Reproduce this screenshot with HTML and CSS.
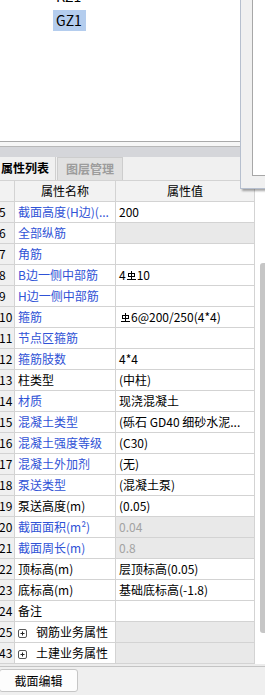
FILE: index.html
```html
<!DOCTYPE html>
<html lang="zh-CN">
<head>
<meta charset="utf-8">
<title>属性列表</title>
<link rel="stylesheet" href="styles.css">
</head>
<body>
<div class="app">
  <div class="tree">
    <div class="tree-item">KZ1</div>
    <div class="tree-item selected">GZ1</div>
  </div>
  <div class="splitter"></div>
  <div class="band"></div>
  <div class="tabs">
    <div class="tab active">属性列表</div>
    <div class="tab">图层管理</div>
  </div>
  <div class="grid-area">
    <div class="props">
      <div class="row head"><div class="num"></div><div class="name">属性名称</div><div class="val">属性值</div></div>
      <div class="row"><div class="num">5</div><div class="name blue">截面高度(H边)(...</div><div class="val">200</div></div>
      <div class="row"><div class="num">6</div><div class="name blue">全部纵筋</div><div class="val off"></div></div>
      <div class="row"><div class="num">7</div><div class="name blue">角筋</div><div class="val"></div></div>
      <div class="row"><div class="num">8</div><div class="name blue">B边一侧中部筋</div><div class="val">4<svg class="grade" width="9" height="9" viewBox="0 0 9 9"><path d="M4.5 0V8.5M0 8.5H9" stroke="#000" fill="none"/><rect x="1.5" y="2.5" width="6" height="3" stroke="#000" fill="none"/></svg>10</div></div>
      <div class="row"><div class="num">9</div><div class="name blue">H边一侧中部筋</div><div class="val"></div></div>
      <div class="row"><div class="num">10</div><div class="name blue">箍筋</div><div class="val"><svg class="grade lead" width="9" height="9" viewBox="0 0 9 9"><path d="M4.5 0V8.5M0 8.5H9" stroke="#000" fill="none"/><rect x="1.5" y="2.5" width="6" height="3" stroke="#000" fill="none"/></svg>6@200/250(4*4)</div></div>
      <div class="row"><div class="num">11</div><div class="name blue">节点区箍筋</div><div class="val"></div></div>
      <div class="row"><div class="num">12</div><div class="name blue">箍筋肢数</div><div class="val">4*4</div></div>
      <div class="row"><div class="num">13</div><div class="name">柱类型</div><div class="val">(中柱)</div></div>
      <div class="row"><div class="num">14</div><div class="name blue">材质</div><div class="val">现浇混凝土</div></div>
      <div class="row"><div class="num">15</div><div class="name blue">混凝土类型</div><div class="val">(砾石 GD40 细砂水泥...</div></div>
      <div class="row"><div class="num">16</div><div class="name blue">混凝土强度等级</div><div class="val">(C30)</div></div>
      <div class="row"><div class="num">17</div><div class="name blue">混凝土外加剂</div><div class="val">(无)</div></div>
      <div class="row"><div class="num">18</div><div class="name blue">泵送类型</div><div class="val">(混凝土泵)</div></div>
      <div class="row"><div class="num">19</div><div class="name">泵送高度(m)</div><div class="val">(0.05)</div></div>
      <div class="row"><div class="num">20</div><div class="name blue">截面面积(m²)</div><div class="val off">0.04</div></div>
      <div class="row"><div class="num">21</div><div class="name blue">截面周长(m)</div><div class="val off">0.8</div></div>
      <div class="row"><div class="num">22</div><div class="name">顶标高(m)</div><div class="val">层顶标高(0.05)</div></div>
      <div class="row"><div class="num">23</div><div class="name">底标高(m)</div><div class="val">基础底标高(-1.8)</div></div>
      <div class="row"><div class="num">24</div><div class="name">备注</div><div class="val"></div></div>
      <div class="row"><div class="num">25</div><div class="name"><svg class="expander" width="9" height="9" viewBox="0 0 9 9"><rect x="0.5" y="0.5" width="8" height="8" rx="1.5" stroke="#555" fill="#fff"/><path d="M2.5 4.5H6.5M4.5 2.5V6.5" stroke="#222"/></svg>钢筋业务属性</div><div class="val off"></div></div>
      <div class="row"><div class="num">43</div><div class="name"><svg class="expander" width="9" height="9" viewBox="0 0 9 9"><rect x="0.5" y="0.5" width="8" height="8" rx="1.5" stroke="#555" fill="#fff"/><path d="M2.5 4.5H6.5M4.5 2.5V6.5" stroke="#222"/></svg>土建业务属性</div><div class="val off"></div></div>
    </div>
    <div class="vscroll"><div class="thumb"></div></div>
  </div>
  <div class="rest-row"></div>
  <div class="footer"><button class="btn">截面编辑</button></div>
  <div class="float-panel"><div class="float-inner"></div></div>
</div>
</body>
</html>
```

FILE: styles.css
```css
html, body {
    margin: 0;
    padding: 0;
}

body {
    width: 265px;
    height: 695px;
    overflow: hidden;
    background: #ffffff;
    font-family: "Noto Sans CJK SC", "Noto Sans", sans-serif;
    font-size: 12px;
    color: #000;
}

.app {
    position: relative;
    width: 265px;
    height: 695px;
    overflow: hidden;
}

/* component tree */
.tree {
    height: 141px;
    width: 240px;
    background: #fff;
    border-bottom: 1px solid #a9a9a9;
    overflow: hidden;
}

.tree-item {
    width: fit-content;
    height: 21px;
    line-height: 21px;
    margin: 0 0 3px 53px;
    padding: 0 4px 0 3px;
    font-size: 14px;
}

.tree-item:first-child {
    margin-top: -14px;
}

.tree-item.selected {
    background: #b4cdee;
}

.splitter {
    height: 4px;
    background: #f6f6f6;
    border-bottom: 1px solid #b8b8b8;
}

.band {
    height: 10px;
    background: #d5d6da;
}

/* tabs */
.tabs {
    display: flex;
    height: 23px;
    background: #f0f0f0;
}

.tab {
    font-weight: bold;
    line-height: 22px;
    box-sizing: border-box;
}

.tab.active {
    width: 56px;
    padding-left: 1px;
    border-right: 1px solid #cfcfcf;
}

.tab:not(.active) {
    width: 66px;
    margin-left: 1px;
    text-align: center;
    color: #9c9c9c;
    background: #e1e1e1;
    border: 1px solid #cdcdcd;
    border-bottom: none;
}

/* property grid */
.grid-area {
    display: flex;
    background: #fff;
}

.props {
    width: 255px;
    border-top: 1px solid #d3d3d3;
}

.row {
    display: grid;
    grid-template-columns: 15px 101px 139px;
    height: 21px;
}

.row > div {
    box-sizing: border-box;
    border-right: 1px solid #d3d3d3;
    border-bottom: 1px solid #d3d3d3;
    line-height: 20px;
    white-space: nowrap;
    overflow: hidden;
}

.num {
    background: #f0f0f0;
    text-indent: -1px;
}

.name {
    padding-left: 3px;
}

.name.blue {
    color: #2f52d6;
}

.val {
    padding-left: 3px;
}

.val.off {
    background: #e9e9e9;
    color: #a3a3a3;
}

.head > div {
    background: #f2f2f2;
    text-align: center;
    padding: 0;
}

.grade {
    vertical-align: 0;
    margin: 0 1px;
}

.grade.lead {
    margin-left: 2px;
}

.expander {
    vertical-align: -1px;
    margin-right: 9px;
}

.vscroll {
    flex: 1;
    overflow: hidden;
}

.thumb {
    width: 9px;
    height: 370px;
    margin: 83px 0 0 5px;
    background: #c6c6c6;
    border-radius: 3px;
}

.rest-row {
    height: 2px;
    background: #ececec;
    border-bottom: 1px solid #c4c4c4;
}

.footer {
    height: 28px;
    background: #efefef;
    padding-top: 2px;
    box-sizing: border-box;
}

.btn {
    display: block;
    width: 79px;
    height: 23px;
    margin-left: -1px;
    padding: 0;
    background: #fdfdfd;
    border: 1px solid #c6c6c6;
    border-radius: 3px;
    font-family: inherit;
    font-size: 12px;
    color: #000;
}

/* floating side window over the top-right corner */
.float-panel {
    position: absolute;
    left: 240px;
    top: -10px;
    width: 40px;
    height: 199px;
    box-sizing: border-box;
    padding: 0 0 12px 11px;
    background: #f0f0f0;
    border: 1px solid #b6bfce;
    box-shadow: 2px 2px 2px rgba(0, 0, 0, 0.35);
}

.float-inner {
    height: 100%;
    box-sizing: border-box;
    background: #fff;
    border-left: 1px solid #a7a7a7;
    border-bottom: 1px solid #a7a7a7;
}
```
